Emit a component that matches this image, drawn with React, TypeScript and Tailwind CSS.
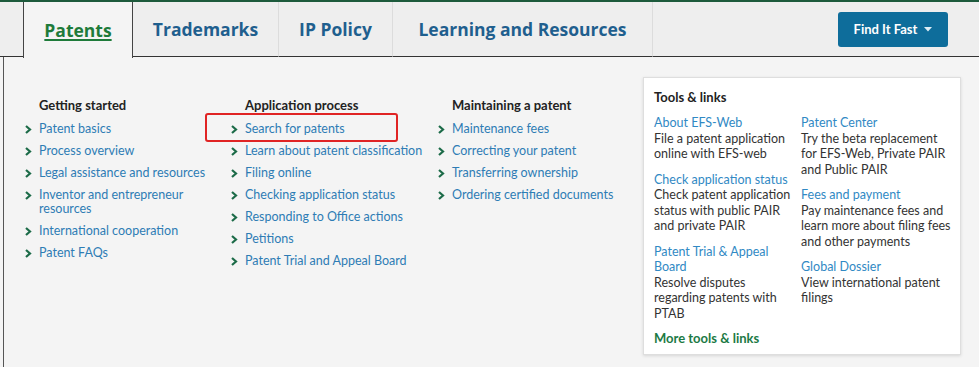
import React from "react";

const col1 = [
  ["Patent basics"],
  ["Process overview"],
  ["Legal assistance and resources"],
  ["Inventor and entrepreneur", "resources"],
  ["International cooperation"],
  ["Patent FAQs"],
];
const col2 = [
  ["Search for patents"],
  ["Learn about patent classification"],
  ["Filing online"],
  ["Checking application status"],
  ["Responding to Office actions"],
  ["Petitions"],
  ["Patent Trial and Appeal Board"],
];
const col3 = [
  ["Maintenance fees"],
  ["Correcting your patent"],
  ["Transferring ownership"],
  ["Ordering certified documents"],
];

function Chevron() {
  return (
    <svg width="7" height="9" viewBox="0 0 7 9" className="shrink-0 mt-[5px]">
      <path d="M1 1 L5 4.5 L1 8" fill="none" stroke="#1c6b48" strokeWidth="2.2" />
    </svg>
  );
}

function Column({ title, items, highlight, narrow }: { title: string; items: string[][]; highlight?: boolean; narrow?: boolean }) {
  return (
    <div className={narrow ? "w-[206px] shrink-0" : "w-[207px] shrink-0"}>
      <div className="pl-[14px] text-[13px] font-bold text-[#222] leading-[16px] mb-[4px]">{title}</div>
      <ul className="flex flex-col">
        {items.map((it, i) => (
          <li key={i} className="relative flex gap-[7px] py-[3px]">
            {highlight && i === 0 && (
              <div className="absolute left-[-26px] top-[-4px] w-[193px] h-[29px] border-2 border-[#e02424] rounded-[3px]" />
            )}
            <Chevron />
            <span className="text-[12.5px] text-[#2e7cb4] leading-[14px] pt-[2px]">
              {it.map((l, j) => (
                <span key={j} className="block">{l}</span>
              ))}
            </span>
          </li>
        ))}
      </ul>
    </div>
  );
}

function Tool({ title, lines }: { title: string[]; lines: string[] }) {
  return (
    <div className="mb-[10px]">
      {title.map((t, i) => (
        <div key={i} className="text-[#3189c4] leading-[15.5px]">{t}</div>
      ))}
      {lines.map((t, i) => (
        <div key={i} className="text-[#333] leading-[15.5px]">{t}</div>
      ))}
    </div>
  );
}

export default function App() {
  return (
    <div
      className="w-[979px] h-[367px] overflow-hidden bg-[#f4f4f4] relative"
      style={{ fontFamily: "Lato, 'Open Sans', sans-serif" }}
    >
      <div className="h-[2px] bg-[#1d5a3c]" />
      <div className="flex h-[55px] bg-[#eeeeee]" style={{ fontFamily: "'Open Sans', sans-serif" }}>
        <div className="w-[23px] border-b border-[#333]" />
        <div className="w-[110px] bg-[#f4f4f4] border-x border-[#444] flex items-center justify-center h-[56px] relative z-10">
          <span className="text-[17.5px] font-bold text-[#1e7b3a] underline underline-offset-[2px] decoration-[1.5px]">Patents</span>
        </div>
        <div className="w-[146px] border-b border-r border-[#333] border-r-[#dcdcdc] flex items-center justify-center">
          <span className="text-[17.5px] font-bold text-[#1f5f8e]">Trademarks</span>
        </div>
        <div className="w-[114px] border-b border-r border-[#333] border-r-[#dcdcdc] flex items-center justify-center">
          <span className="text-[17.5px] font-bold text-[#1f5f8e]">IP Policy</span>
        </div>
        <div className="w-[260px] border-b border-r border-[#333] border-r-[#dcdcdc] flex items-center justify-center">
          <span className="text-[17.5px] font-bold text-[#1f5f8e]">Learning and Resources</span>
        </div>
        <div className="flex-1 border-b border-[#333] flex items-start justify-end pr-[31px] pt-[10px]">
          <button className="w-[110px] h-[35px] bg-[#0e6d9b] rounded-[3px] text-white text-[13px] font-bold flex items-center justify-center gap-[7px]" style={{ fontFamily: "Lato, sans-serif" }}>
            Find It Fast
            <svg width="8" height="5" viewBox="0 0 8 5"><path d="M0 0 H8 L4 4.5 Z" fill="#dfeef6" /></svg>
          </button>
        </div>
      </div>
      <div className="ml-[3px] border-l border-[#555] h-[310px] flex">
        <div className="flex pl-[21px] pt-[40px]">
          <Column title="Getting started" items={col1} narrow />
          <Column title="Application process" items={col2} highlight />
          <Column title="Maintaining a patent" items={col3} />
        </div>
        <div className="ml-[-2px] mt-[20px] w-[318px] h-[278px] bg-white border border-[#dedede] shadow-[0_1px_3px_rgba(0,0,0,0.12)] pl-[10px] pt-[11px] text-[12.5px]">
          <div className="font-bold text-[#222] text-[13px] leading-[16px] mb-[10px]">Tools &amp; links</div>
          <div className="flex">
            <div className="w-[148px]">
              <Tool title={["About EFS-Web"]} lines={["File a patent application", "online with EFS-web"]} />
              <Tool title={["Check application status"]} lines={["Check patent application", "status with public PAIR", "and private PAIR"]} />
              <Tool title={["Patent Trial & Appeal", "Board"]} lines={["Resolve disputes", "regarding patents with", "PTAB"]} />
            </div>
            <div className="w-[160px]">
              <Tool title={["Patent Center"]} lines={["Try the beta replacement", "for EFS-Web, Private PAIR", "and Public PAIR"]} />
              <Tool title={["Fees and payment"]} lines={["Pay maintenance fees and", "learn more about filing fees", "and other payments"]} />
              <Tool title={["Global Dossier"]} lines={["View international patent", "filings"]} />
            </div>
          </div>
          <div className="font-bold text-[#1c7a45] text-[13px] mt-[-2px]">More tools &amp; links</div>
        </div>
      </div>
    </div>
  );
}
